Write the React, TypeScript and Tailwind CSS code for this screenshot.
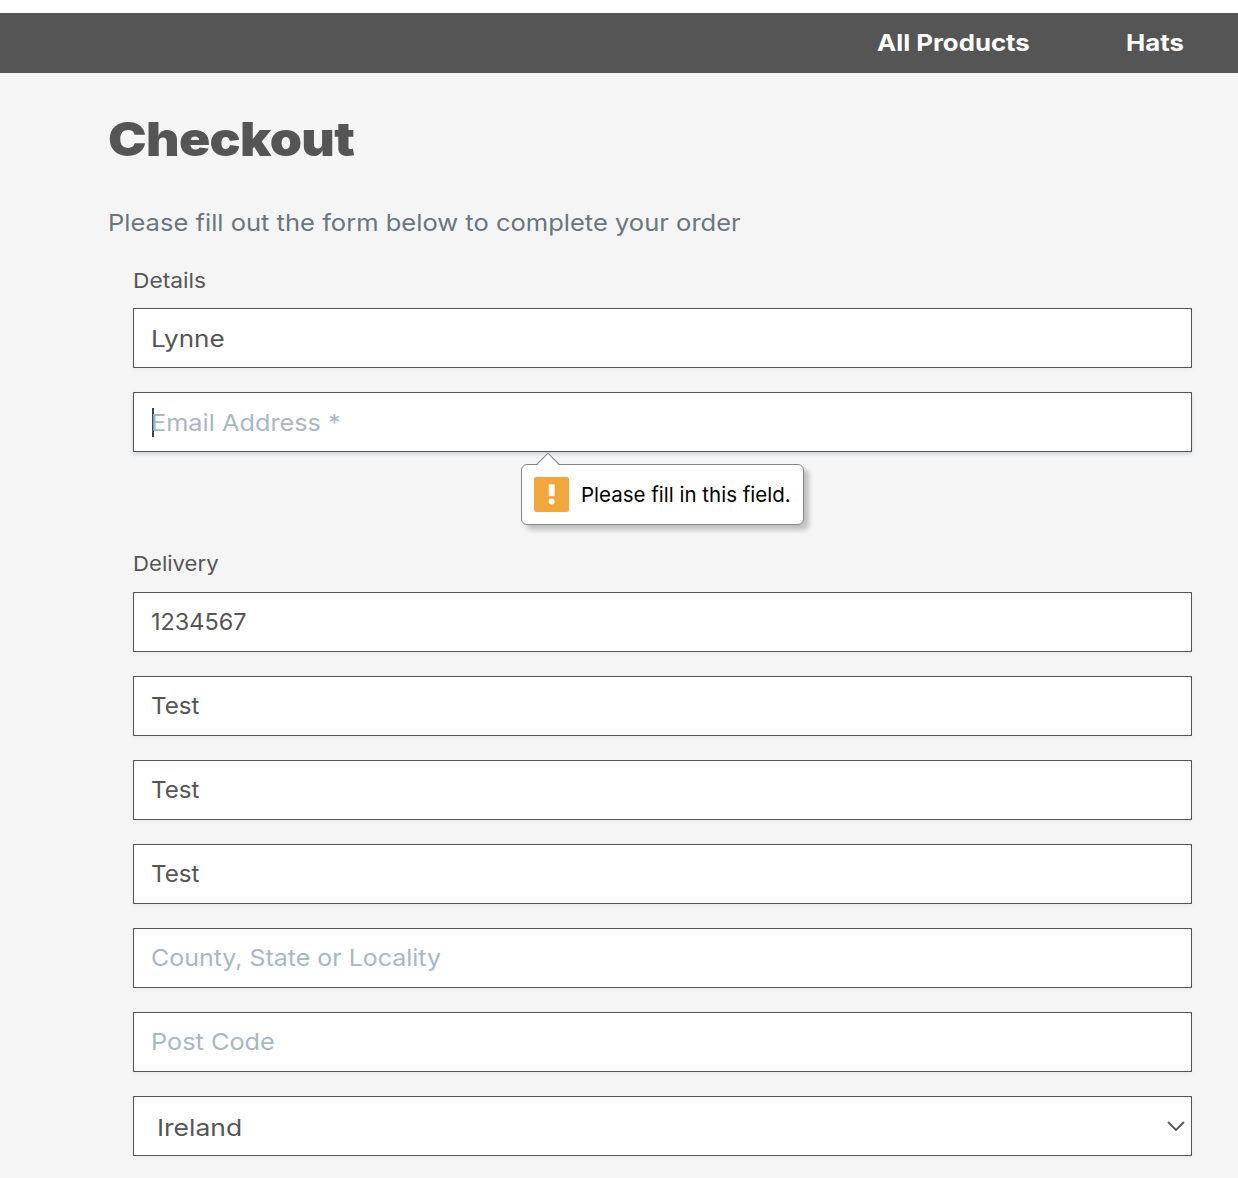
type FieldProps = {
  value?: string;
  placeholder?: string;
  stretch: string;
  focused?: boolean;
  low?: boolean;
};

function Field({ value, placeholder, stretch, focused, low }: FieldProps) {
  return (
    <div
      className={`relative mb-6 flex h-[60px] items-center border border-[#555] bg-white pl-[17px] ${
        low ? "pt-[2px]" : ""
      } ${
        focused
          ? "shadow-[0_2px_4px_rgba(60,90,110,0.2)]"
          : "shadow-[0_2px_4px_rgba(60,66,87,0.05)]"
      }`}
    >
      {focused && <span className="absolute left-[18px] top-[15px] h-[29px] w-[2px] bg-[#444]" />}
      <span
        className={`origin-left whitespace-pre text-[23px] leading-[30px] ${stretch} ${
          value ? "text-[#555]" : "text-[#aab7c4]"
        }`}
      >
        {value ?? placeholder}
      </span>
      {focused && <ValidationBubble />}
    </div>
  );
}

function ValidationBubble() {
  return (
    <div className="absolute left-[387px] top-[71px] z-10 flex h-[61px] w-[283px] items-center rounded-[6px] border border-[#858585] bg-white pl-3 shadow-[5px_5px_5px_rgba(0,0,0,0.22)]">
      <svg
        className="absolute left-[13px] top-[-13px]"
        width="26"
        height="14"
        viewBox="0 0 26 14"
        fill="none"
      >
        <path d="M1.5 14 L2.5 12.5 L13 1.5 L23.5 12.5 L24.5 14 Z" fill="white" />
        <path d="M1 12.5 H1.8 L13 1.2 L24.2 12.5 H25" stroke="#858585" strokeWidth="1.1" />
      </svg>
      <svg width="35" height="35" viewBox="0 0 35 35" className="shrink-0">
        <rect width="35" height="35" rx="2.5" fill="#f2a73b" />
        <rect x="14.7" y="7.4" width="6" height="11.8" fill="white" />
        <circle cx="17.6" cy="24.6" r="3" fill="white" />
      </svg>
      <span className="ml-3 whitespace-nowrap text-[20.5px] leading-6 text-black">
        Please fill in this field.
      </span>
    </div>
  );
}

export default function App() {
  return (
    <div className="h-[1178px] w-[1238px] overflow-hidden bg-[#f5f5f5] font-['Inter',sans-serif] text-[#555]">
      <div className="h-[13px] bg-white" />
      <header className="flex h-[60px] items-center justify-end bg-[#555] pr-[52px] text-[23px] font-bold text-white">
        <a className="mr-[95px] w-[154px] origin-left scale-x-[1.12] whitespace-nowrap">All Products</a>
        <a className="w-[60px] origin-left scale-x-[1.12]">Hats</a>
      </header>
      <main className="pl-[108px] pr-[46px] pt-[36px]">
        <h1 className="h-[60px] origin-left scale-x-[1.1] text-[47px] font-black leading-[60px] tracking-[-0.6px]">
          Checkout
        </h1>
        <p className="mt-[36px] h-9 origin-left scale-x-[1.11] whitespace-nowrap text-[23px] leading-9 text-[#6c757d]">
          Please fill out the form below to complete your order
        </p>
        <form className="pl-[25px]">
          <div className="mt-[25px] h-[42px] w-[120px] origin-left scale-x-[1.11] text-[20.5px] leading-[30px]">
            Details
          </div>
          <Field value="Lynne" stretch="scale-x-[1.135]" low />
          <Field placeholder="Email Address *" stretch="scale-x-[1.1]" focused low />
          <div className="mt-[97px] h-[43px] w-[120px] origin-left scale-x-[1.08] text-[20.5px] leading-[30px]">
            Delivery
          </div>
          <Field value="1234567" stretch="scale-x-[1.02]" />
          <Field value="Test" stretch="scale-x-[1.05]" />
          <Field value="Test" stretch="scale-x-[1.05]" />
          <Field value="Test" stretch="scale-x-[1.05]" />
          <Field placeholder="County, State or Locality" stretch="scale-x-[1.085]" />
          <Field placeholder="Post Code" stretch="scale-x-[1.1]" />
          <div className="flex h-[60px] items-center justify-between border border-[#555] bg-white pl-[23px] pr-[6px] shadow-[0_2px_4px_rgba(60,66,87,0.05)]">
            <span className="origin-left scale-x-[1.15] pt-[3px] text-[23px] leading-[30px]">Ireland</span>
            <svg width="18" height="12" viewBox="0 0 18 12" fill="none">
              <path d="M1 2 L9 10 L17 2" stroke="#555" strokeWidth="1.8" />
            </svg>
          </div>
        </form>
      </main>
    </div>
  );
}
